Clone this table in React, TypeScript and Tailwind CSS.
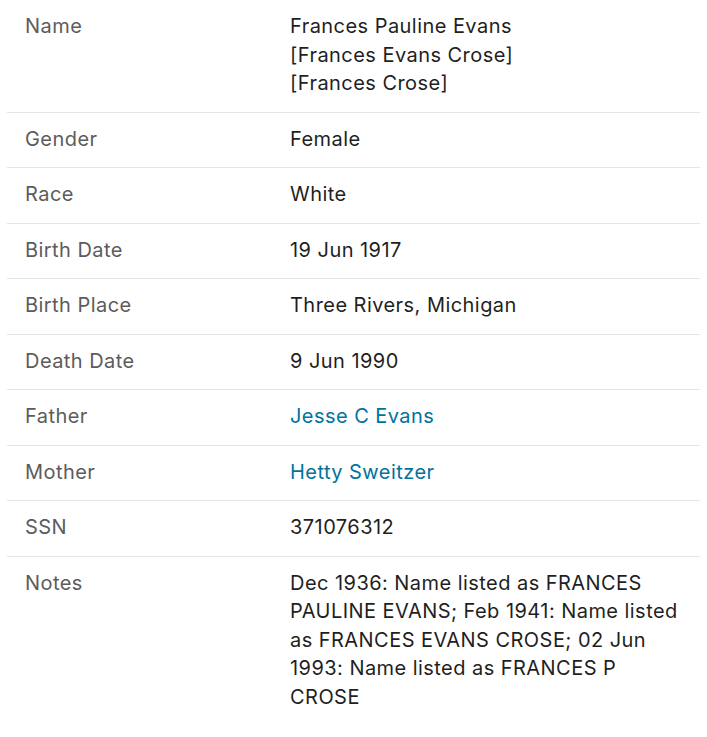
const rows: { label: string; value: React.ReactNode; link?: boolean }[] = [
  {
    label: "Name",
    value: (
      <>
        Frances Pauline Evans
        <br />
        [Frances Evans Crose]
        <br />
        [Frances Crose]
      </>
    ),
  },
  { label: "Gender", value: "Female" },
  { label: "Race", value: "White" },
  { label: "Birth Date", value: "19 Jun 1917" },
  { label: "Birth Place", value: "Three Rivers, Michigan" },
  { label: "Death Date", value: "9 Jun 1990" },
  { label: "Father", value: "Jesse C Evans", link: true },
  { label: "Mother", value: "Hetty Sweitzer", link: true },
  { label: "SSN", value: "371076312" },
  {
    label: "Notes",
    value:
      "Dec 1936: Name listed as FRANCES PAULINE EVANS; Feb 1941: Name listed as FRANCES EVANS CROSE; 02 Jun 1993: Name listed as FRANCES P CROSE",
  },
];

export default function App() {
  return (
    <div className="min-h-screen bg-white px-[7px] font-['Inter',sans-serif] text-[20px] leading-[28.5px] tracking-[0.45px]">
      {rows.map((row, i) => (
        <div
          key={row.label}
          className={
            "grid grid-cols-[283px_1fr] pt-[12px] pb-[14px] " +
            (i < rows.length - 1 ? "border-b border-[#e5e5e5]" : "")
          }
        >
          <div className="pl-[18px] text-[#5c5c5c]">{row.label}</div>
          <div className="pr-[16px]">
            {row.link ? (
              <a href="#" className="text-[#00739e]">
                {row.value}
              </a>
            ) : (
              <span className="text-[#1f1f1f]">{row.value}</span>
            )}
          </div>
        </div>
      ))}
    </div>
  );
}
